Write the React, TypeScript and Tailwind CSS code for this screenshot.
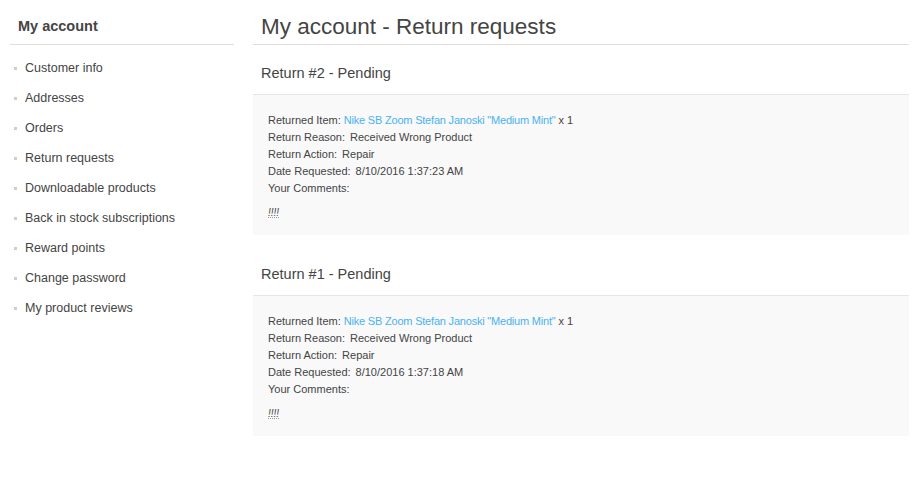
const MENU = [
  'Customer info',
  'Addresses',
  'Orders',
  'Return requests',
  'Downloadable products',
  'Back in stock subscriptions',
  'Reward points',
  'Change password',
  'My product reviews',
];

const RETURNS = [
  { id: 2, date: '8/10/2016 1:37:23 AM' },
  { id: 1, date: '8/10/2016 1:37:18 AM' },
];

function ReturnItem({ id, date, first }: { id: number; date: string; first?: boolean }) {
  return (
    <div className={first ? 'mt-[5px]' : 'mt-[16px]'}>
      <div className="h-[44px] flex items-center pl-2 pt-[4px] text-[14.5px] text-[#444]">
        Return #{id} - Pending
      </div>
      <div className="bg-[#f9f9f9] border-t border-[#e6e6e6] pt-[17px] pb-[14px] pl-[15px] text-[11px] leading-[17px] text-[#444]">
        <div>
          Returned Item:
          <span className="ml-[3px] text-[#4ab2f1] tracking-[-0.2px]">Nike SB Zoom Stefan Janoski "Medium Mint"</span>
          <span className="ml-[3px]">x 1</span>
        </div>
        <div>
          Return Reason:<span className="ml-[5px]">Received Wrong Product</span>
        </div>
        <div>
          Return Action:<span className="ml-[5px]">Repair</span>
        </div>
        <div>
          Date Requested:<span className="ml-[5px]">{date}</span>
        </div>
        <div>Your Comments:</div>
        <div className="mt-[7px] italic text-[10px] underline decoration-dotted decoration-[#999]">!!!!</div>
      </div>
    </div>
  );
}

export default function App() {
  return (
    <div
      className="w-[912px] h-[488px] bg-white flex text-[#444]"
      style={{ fontFamily: '"Liberation Sans", Arial, sans-serif' }}
    >
      {/* Sidebar */}
      <div className="w-[224px] ml-[10px] shrink-0">
        <div className="h-[45px] flex items-center pl-2 pt-[9px] border-b border-[#dedede] text-[14.5px] font-bold text-[#444]">
          My account
        </div>
        <ul className="pt-[8px]">
          {MENU.map((item) => (
            <li key={item} className="h-[30px] flex items-center text-[12.5px] text-[#444]">
              <span className="w-[3px] h-[3px] bg-[#cfcfcf] ml-[4px] mr-[8px]" />
              {item}
            </li>
          ))}
        </ul>
      </div>

      {/* Main */}
      <div className="w-[656px] ml-[19px] shrink-0">
        <div className="h-[45px] flex items-center pl-2 pt-[10px] border-b border-[#dedede] text-[22.5px] text-[#444]">
          My account - Return requests
        </div>
        {RETURNS.map((r, i) => (
          <ReturnItem key={r.id} id={r.id} date={r.date} first={i === 0} />
        ))}
      </div>
    </div>
  );
}
